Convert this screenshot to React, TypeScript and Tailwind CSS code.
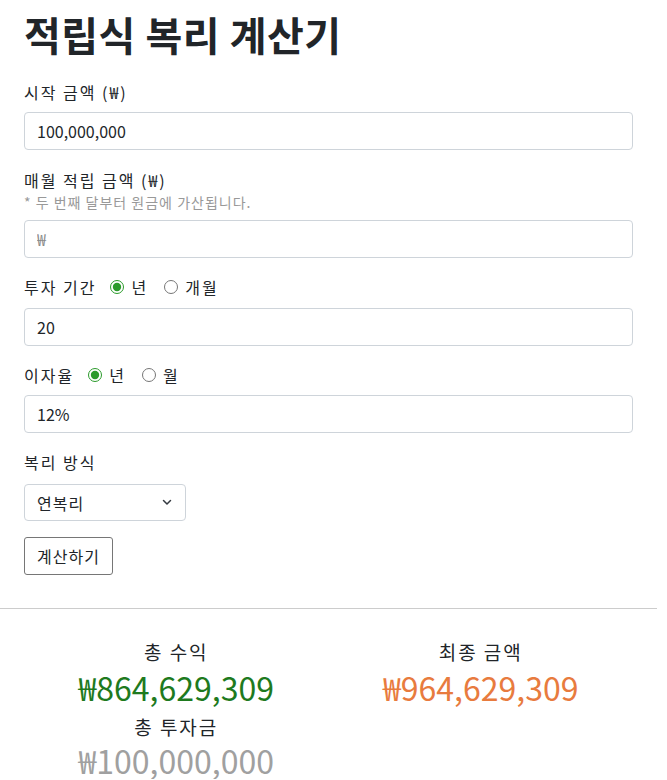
import React, { useState } from 'react';

const font = { fontFamily: '"Noto Sans CJK KR", "Noto Sans", sans-serif' };

function Field({ value, placeholder }: { value?: string; placeholder?: string }) {
  return (
    <input
      type="text"
      defaultValue={value}
      placeholder={placeholder}
      className="block w-full h-[38px] px-3 text-[16px] text-[#212529] placeholder:text-[#8a8a8a] bg-white border border-[#ced4da] rounded-[4px] outline-none"
    />
  );
}

function Radio({ name, label, checked }: { name: string; label: string; checked?: boolean }) {
  return (
    <label className="flex items-center gap-[7px]">
      <input type="radio" name={name} defaultChecked={checked} className="w-[14px] h-[14px] m-0 accent-[#2b9a2b]" />
      <span className="tracking-[2px]">{label}</span>
    </label>
  );
}

export default function App() {
  const [mode, setMode] = useState('연복리');

  return (
    <div className="w-[657px] bg-white text-[#212529] text-[16px] leading-[24px]" style={font}>
      <div className="px-6 pt-[8px]">
        <h1 className="text-[40px] leading-[52px] font-bold tracking-[0.5px] mb-[20px]">적립식 복리 계산기</h1>

        <div className="mb-[18px]">
          <div className="mb-[8px] tracking-[2px]">시작 금액 (₩)</div>
          <Field value="100,000,000" />
        </div>

        <div className="mb-[17px]">
          <div className="tracking-[2px]">매월 적립 금액 (₩)</div>
          <div className="text-[14px] leading-[20px] tracking-[1px] text-[#999] mb-[8px]">* 두 번째 달부터 원금에 가산됩니다.</div>
          <Field placeholder="₩" />
        </div>

        <div className="mb-[17px]">
          <div className="flex items-center gap-[14px] mb-[9px]">
            <span className="tracking-[2px]">투자 기간</span>
            <div className="flex items-center gap-[16px]">
              <Radio name="period" label="년" checked />
              <Radio name="period" label="개월" />
            </div>
          </div>
          <Field value="20" />
        </div>

        <div className="mb-[17px]">
          <div className="flex items-center gap-[14px] mb-[8px]">
            <span className="tracking-[2px]">이자율</span>
            <div className="flex items-center gap-[16px]">
              <Radio name="rate" label="년" checked />
              <Radio name="rate" label="월" />
            </div>
          </div>
          <Field value="12%" />
        </div>

        <div className="mb-[16px]">
          <div className="mb-[10px] tracking-[2px]">복리 방식</div>
          <div className="relative w-[162px]">
            <select
              value={mode}
              onChange={(e) => setMode(e.target.value)}
              className="block w-full h-[37px] pl-3 pr-8 appearance-none bg-white border border-[#ced4da] rounded-[4px] text-[16px] tracking-[1px] text-[#212529] outline-none"
            >
              <option>연복리</option>
              <option>월복리</option>
              <option>일복리</option>
            </select>
            <svg className="absolute right-[14px] top-[15px] pointer-events-none" width="10" height="7" viewBox="0 0 10 7" fill="none">
              <path d="M1.5 1.5L5 5L8.5 1.5" stroke="#343a40" strokeWidth="1.5" strokeLinecap="round" strokeLinejoin="round" />
            </svg>
          </div>
        </div>

        <button className="h-[38px] px-3 bg-white border border-[#767676] rounded-[3px] text-[16px] tracking-[1px] text-[#212529] mb-[33px]">
          계산하기
        </button>
      </div>

      <hr className="border-0 border-t border-[#cccccc]" />

      <div className="px-6 pt-[29px] grid grid-cols-2 text-center">
        <div className="h-[75px]">
          <div className="text-[19px] leading-[28px] tracking-[2px]">총 수익</div>
          <div className="text-[32px] leading-[42px] text-[#1e7a1e]">₩864,629,309</div>
        </div>
        <div className="h-[75px]">
          <div className="text-[19px] leading-[28px] tracking-[2px]">최종 금액</div>
          <div className="text-[32px] leading-[42px] text-[#e87b3e]">₩964,629,309</div>
        </div>
        <div>
          <div className="text-[19px] leading-[28px] tracking-[2px]">총 투자금</div>
          <div className="text-[32px] leading-[38px] text-[#a0a0a0]">₩100,000,000</div>
        </div>
      </div>
    </div>
  );
}
